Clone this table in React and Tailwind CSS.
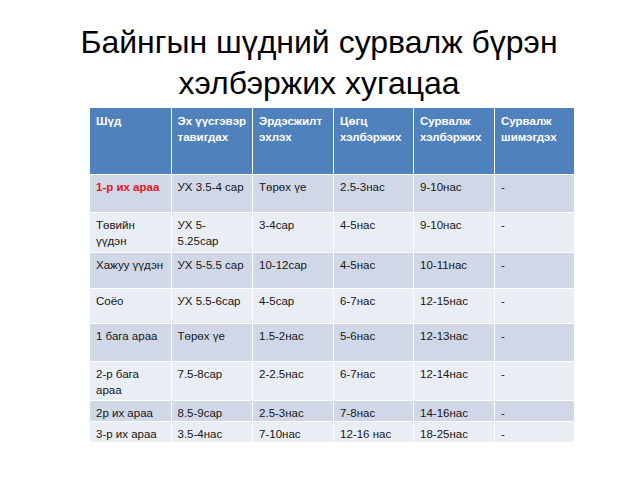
export default function App() {
  const rows = [
    { h: "h-[38px]", bg: "bg-[#d0d8e8]", cells: ["1-р их араа", "УХ 3.5-4 сар", "Төрөх үе", "2.5-3нас", "9-10нас", "-"], red: true },
    { h: "h-[40px]", bg: "bg-[#e9edf4]", cells: [["Төвийн", "үүдэн"], ["УХ 5-", "5.25сар"], "3-4сар", "4-5нас", "9-10нас", "-"] },
    { h: "h-[36px]", bg: "bg-[#d0d8e8]", cells: ["Хажуу үүдэн", "УХ 5-5.5 сар", "10-12сар", "4-5нас", "10-11нас", "-"] },
    { h: "h-[35px]", bg: "bg-[#e9edf4]", cells: ["Соёо", "УХ 5.5-6сар", "4-5сар", "6-7нас", "12-15нас", "-"] },
    { h: "h-[38px]", bg: "bg-[#d0d8e8]", cells: ["1 бага араа", "Төрөх үе", "1.5-2нас", "5-6нас", "12-13нас", "-"] },
    { h: "h-[39px]", bg: "bg-[#e9edf4]", cells: [["2-р бага", "араа"], "7.5-8сар", "2-2.5нас", "6-7нас", "12-14нас", "-"] },
    { h: "h-[20px]", bg: "bg-[#d0d8e8]", cells: ["2р их араа", "8.5-9сар", "2.5-3нас", "7-8нас", "14-16нас", "-"] },
    { h: "h-[20px]", bg: "bg-[#e9edf4]", cells: ["3-р их араа", "3.5-4нас", "7-10нас", "12-16 нас", "18-25нас", "-"] },
  ]
  const head = [["Шүд"], ["Эх үүсгэвэр", "тавигдах"], ["Эрдэсжилт", "эхлэх"], ["Цөгц", "хэлбэржих"], ["Сурвалж", "хэлбэржих"], ["Сурвалж", "шимэгдэх"]]
  const widths = ["w-[81px]", "w-[80px]", "w-[81px]", "w-[80px]", "w-[81px]", "w-[79px]"]

  const lines = (c) => (Array.isArray(c) ? c : [c]).map((l, i) => <div key={i}>{l}</div>)

  return (
    <div className="w-[638px] h-[478px] bg-white overflow-hidden" style={{ fontFamily: '"Liberation Sans", Arial, sans-serif' }}>
      <h1 className="pt-[22px] text-center text-[32px] leading-[41px] text-black font-normal">
        Байнгын шүдний сурвалж бүрэн
        <br />
        хэлбэржих хугацаа
      </h1>
      <table className="ml-[90px] mt-[4px] border-collapse text-[11.5px] leading-[16px] whitespace-nowrap">
        <thead>
          <tr className="h-[66px] bg-[#4f81bd]">
            {head.map((c, i) => (
              <th key={i} className={`${widths[i]} align-top text-left font-bold text-white px-[6px] pt-[5px] border border-white border-t-0 first:border-l-0 last:border-r-0`}>
                {lines(c)}
              </th>
            ))}
          </tr>
        </thead>
        <tbody>
          {rows.map((r, ri) => (
            <tr key={ri} className={`${r.h} ${r.bg}`}>
              {r.cells.map((c, i) => (
                <td
                  key={i}
                  className={`align-top px-[6px] pt-[4px] border border-white first:border-l-0 last:border-r-0 ${
                    i === 0 && r.red ? "text-[#e8141c] font-bold" : "text-[#161616]"
                  }`}
                >
                  {lines(c)}
                </td>
              ))}
            </tr>
          ))}
        </tbody>
      </table>
    </div>
  )
}
